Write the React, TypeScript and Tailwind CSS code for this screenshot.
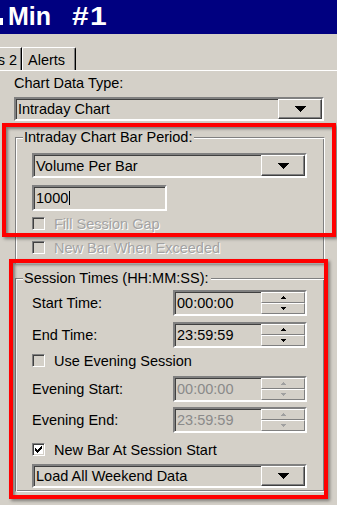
import React from "react";

const SUNKEN =
  "border-2 border-t-[#808080] border-l-[#808080] border-b-white border-r-white shadow-[inset_1px_1px_0_#404040,inset_-1px_-1px_0_#d4d0c8]";
const RAISED =
  "border border-t-white border-l-white border-r-[#404040] border-b-[#404040] shadow-[inset_-1px_-1px_0_#808080] bg-[#d4d0c8]";

function Combo({ text, className }: { text: string; className: string }) {
  return (
    <div className={`flex bg-[#d4d0c8] ${SUNKEN} ${className}`}>
      <div className="flex-1 flex items-center pl-[2px] leading-[16px] whitespace-nowrap">{text}</div>
      <div className={`w-[44px] flex items-center justify-center ${RAISED}`}>
        <svg width="11" height="6" viewBox="0 0 11 6" shapeRendering="crispEdges">
          <polygon points="0,0 11,0 5.5,6" fill="#000" />
        </svg>
      </div>
    </div>
  );
}

function SpinBtn({ up, disabled }: { up: boolean; disabled: boolean }) {
  const c = disabled ? "#a0a0a0" : "#000";
  return (
    <div className="flex-1 flex items-center justify-center border border-t-white border-l-white border-r-[#808080] border-b-[#808080] bg-[#d4d0c8]">
      <svg width="5" height="3" viewBox="0 0 5 3" shapeRendering="crispEdges">
        {up ? <polygon points="2.5,0 5,3 0,3" fill={c} /> : <polygon points="0,0 5,0 2.5,3" fill={c} />}
      </svg>
    </div>
  );
}

function TimeEdit({ text, disabled = false }: { text: string; disabled?: boolean }) {
  return (
    <div className={`flex w-[134px] h-[26px] bg-[#d4d0c8] ${SUNKEN}`}>
      <div className={`flex-1 flex items-center pl-[2px] leading-[16px] ${disabled ? "text-[#8a8a8a]" : ""}`}>
        {text}
      </div>
      <div className="w-[44px] flex flex-col">
        <SpinBtn up disabled={disabled} />
        <SpinBtn up={false} disabled={disabled} />
      </div>
    </div>
  );
}

function Check({
  label,
  checked = false,
  disabled = false,
  className = "",
}: {
  label: string;
  checked?: boolean;
  disabled?: boolean;
  className?: string;
}) {
  return (
    <div className={`flex items-start h-[16px] ${className}`}>
      <div
        className={`mt-[1px] w-[13px] h-[13px] flex items-center justify-center border border-t-[#808080] border-l-[#808080] border-b-white border-r-white shadow-[inset_1px_1px_0_#404040,inset_-1px_-1px_0_#d4d0c8] ${
          checked ? "bg-white" : "bg-[#d4d0c8]"
        }`}
      >
        {checked && (
          <svg width="7" height="7" viewBox="0 0 7 7" shapeRendering="crispEdges">
            <rect x="6" y="0" width="1" height="1" fill="#000" />
            <rect x="5" y="1" width="2" height="1" fill="#000" />
            <rect x="0" y="2" width="1" height="1" fill="#000" />
            <rect x="4" y="2" width="3" height="1" fill="#000" />
            <rect x="0" y="3" width="2" height="1" fill="#000" />
            <rect x="3" y="3" width="3" height="1" fill="#000" />
            <rect x="0" y="4" width="5" height="1" fill="#000" />
            <rect x="1" y="5" width="3" height="1" fill="#000" />
            <rect x="2" y="6" width="1" height="1" fill="#000" />
          </svg>
        )}
      </div>
      <span
        className={`ml-[9px] leading-[16px] whitespace-nowrap ${
          disabled ? "text-[#a3a3a3] [text-shadow:1px_1px_0_#ffffff]" : ""
        }`}
      >
        {label}
      </span>
    </div>
  );
}

function Group({
  label,
  children,
  bodyClass,
  className,
}: {
  label: string;
  children: React.ReactNode;
  bodyClass: string;
  className: string;
}) {
  return (
    <div className={`w-[310px] ml-[1px] flex flex-col ${className}`}>
      <div className="flex h-[16px]">
        <div className="w-[8px] mt-[8px] border-t border-l border-t-[#808080] border-l-[#808080] shadow-[inset_1px_1px_0_#ffffff]" />
        <span className="pl-[1px] pr-[2px] leading-[16px] whitespace-nowrap">{label}</span>
        <div className="flex-1 mt-[8px] border-t border-t-[#808080] border-r border-r-white shadow-[inset_0_1px_0_#ffffff,inset_-1px_0_0_#808080]" />
      </div>
      <div
        className={`flex flex-col pl-[16px] border-l border-l-[#808080] border-r border-r-white border-b border-b-white shadow-[inset_1px_0_0_#ffffff,inset_-1px_0_0_#808080,inset_0_-1px_0_#808080] ${bodyClass}`}
      >
        {children}
      </div>
    </div>
  );
}

function TimeRow({
  label,
  value,
  disabled = false,
  className = "",
}: {
  label: string;
  value: string;
  disabled?: boolean;
  className?: string;
}) {
  return (
    <div className={`flex items-center h-[26px] ${className}`}>
      <div className="w-[141px] leading-[16px] whitespace-nowrap">{label}</div>
      <TimeEdit text={value} disabled={disabled} />
    </div>
  );
}

export default function App() {
  return (
    <div className="relative w-[337px] h-[505px] overflow-hidden bg-[#d4d0c8] text-black text-[14.5px] font-['Liberation_Sans',Arial,sans-serif]">
      {/* Title bar */}
      <div className="h-[34px] bg-[#000080] flex items-start text-white font-bold text-[25px] leading-[28px]">
        <div className="w-[3px] h-[7px] mt-[18px] bg-white" />
        <span className="ml-[5px] pt-[2px]">Min</span>
        <span className="ml-[21px] pt-[2px] inline-block origin-left scale-x-[1.2] tracking-[1px]">#1</span>
      </div>

      {/* Tabs */}
      <div className="h-[37px] border-b border-b-white flex items-end">
        <div className="w-[22px] h-[23px] border-t border-t-white border-r border-r-black shadow-[inset_-1px_0_0_#808080] flex justify-end pr-[4px] pt-[4px] leading-[16px] whitespace-nowrap">
          s 2
        </div>
        <div className="w-[54px] h-[23px] border-t border-t-white border-l border-l-white border-r border-r-black rounded-tl-[2px] rounded-tr-[2px] shadow-[inset_-1px_0_0_#808080] pl-[5px] pt-[4px] leading-[16px]">
          Alerts
        </div>
      </div>

      {/* Content */}
      <div className="pl-[14px] flex flex-col">
        <div className="mt-[4px] leading-[16px]">Chart Data Type:</div>
        <Combo text="Intraday Chart" className="mt-[6px] w-[310px] h-[24px]" />

        <Group label="Intraday Chart Bar Period:" className="mt-[8px]" bodyClass="pt-[8px] pb-[7px]">
          <Combo text="Volume Per Bar" className="w-[275px] h-[25px]" />
          <div className={`mt-[7px] w-[135px] h-[26px] flex items-center pl-[2px] bg-[#d4d0c8] ${SUNKEN}`}>
            <span className="leading-[16px]">1000</span>
            <span className="ml-[1px] w-[1px] h-[14px] bg-black" />
          </div>
          <Check label="Fill Session Gap" disabled className="mt-[5px]" />
          <Check label="New Bar When Exceeded" disabled className="mt-[8px]" />
        </Group>

        <Group label="Session Times (HH:MM:SS):" className="mt-[6px]" bodyClass="pt-[4px] pb-[3px]">
          <TimeRow label="Start Time:" value="00:00:00" />
          <TimeRow label="End Time:" value="23:59:59" className="mt-[6px]" />
          <Check label="Use Evening Session" className="mt-[5px]" />
          <TimeRow label="Evening Start:" value="00:00:00" disabled className="mt-[7px]" />
          <TimeRow label="Evening End:" value="23:59:59" disabled className="mt-[5px]" />
          <Check label="New Bar At Session Start" checked className="mt-[9px]" />
          <Combo text="Load All Weekend Data" className="mt-[6px] w-[275px] h-[24px]" />
        </Group>
      </div>

      {/* Red annotation rectangles */}
      <div className="absolute left-[2px] top-[123px] w-[334px] h-[114px] border-4 border-[#ff0000] shadow-[2px_2px_3px_rgba(0,0,0,0.4),inset_2px_2px_3px_rgba(0,0,0,0.4)]" />
      <div className="absolute left-[9px] top-[259px] w-[319px] h-[240px] border-4 border-[#ff0000] shadow-[2px_2px_3px_rgba(0,0,0,0.4),inset_2px_2px_3px_rgba(0,0,0,0.4)]" />
    </div>
  );
}
